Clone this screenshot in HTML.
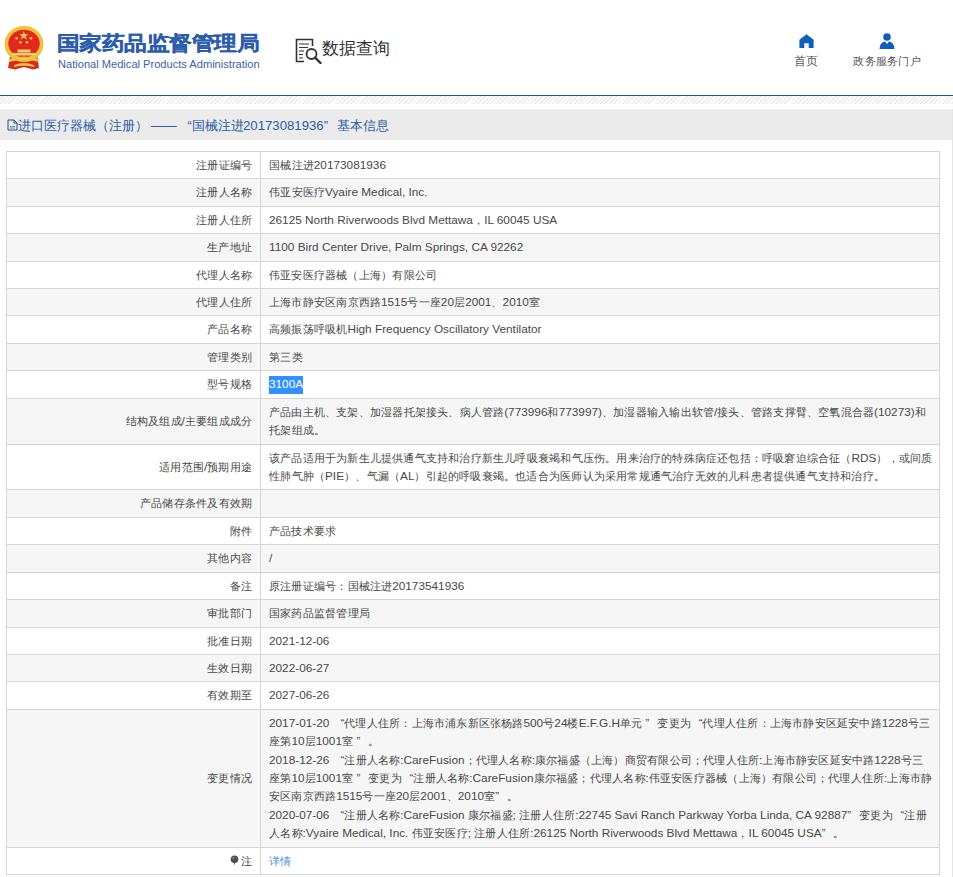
<!DOCTYPE html>
<html><head><meta charset="utf-8">
<style>
*{margin:0;padding:0;box-sizing:border-box}
html,body{width:953px;height:877px;overflow:hidden;background:#fff}
body{font-family:"Liberation Sans",sans-serif;color:#555;position:relative}
i{font-style:normal;display:inline-block;white-space:nowrap;text-align:justify;text-align-last:justify}
i.c{font-size:var(--c);width:1em}
i.d{font-size:var(--c);margin-left:5px;width:2.15em}
i.q1{font-size:var(--c);width:1.04em;text-align:right;text-align-last:right}
i.q2{font-size:var(--c);width:1.04em;text-align:left;text-align-last:left}
.hdr{position:absolute;left:0;top:0;width:953px;height:95px;background:#fff}
.emb{position:absolute;left:0;top:20px}
.t1{position:absolute;left:57px;top:29px;transform:scaleY(0.88);transform-origin:0 14px;-webkit-text-stroke:0.35px #2c5cad;--c:22.4px;font-weight:bold;color:#2c5cad;white-space:nowrap;line-height:30px}
.t2{position:absolute;left:58px;top:58px;font-size:11.1px;color:#3a62a6;white-space:nowrap;line-height:13px}
.sq{position:absolute;left:295px;top:38px}
.sqt{position:absolute;left:322px;top:37px;--c:17px;color:#333;white-space:nowrap;line-height:24px}
.nav{position:absolute;top:33px;text-align:center;--c:11.5px;color:#555;white-space:nowrap;line-height:14px}
.bl{position:absolute;left:0;top:95px;width:953px;height:1px;background:#24518f}
.hatch{position:absolute;left:0;top:96px;width:953px;height:8px;
 background:repeating-linear-gradient(135deg,#fff 0,#fff 1.8px,#ebebeb 1.8px,#ebebeb 3.1px)}
.bar{position:absolute;left:0;top:109px;width:953px;height:31px;background:#ebebeb}
.bart{position:absolute;left:7px;top:9px;font-size:13.2px;--c:12.8px;color:#2a5ca8;white-space:nowrap;line-height:16px}
.rl{position:absolute;left:952px;top:109px;width:1px;height:768px;background:#e6e6e6}
table{position:absolute;left:6px;top:151px;width:934px;border-collapse:collapse;font-size:11.8px;--c:11.2px;table-layout:fixed}
td{border:1px solid #d6d6d6;padding:4px 8px 4px 8px;line-height:18.4px;vertical-align:middle;white-space:nowrap;color:#484848}
td.l{width:254px;text-align:right;padding-right:8px}
tr:nth-child(even) td{background:#f6f6f6}
.sel{background:#3390ff;color:#fff;display:inline-block;height:17.6px;line-height:17.6px}
.lnk{color:#4a8fe0}
</style></head><body>
<div class="hdr">
 <svg class="emb" width="50" height="52" viewBox="0 0 50 52">
  <path d="M10 37 L8 48 L15 49.5 L24 47 L33 49.5 L39 48 L37.5 37 Z" fill="#d42a1e"/>
  <ellipse cx="24" cy="24" rx="19.5" ry="18" fill="#f0c040"/>
  <ellipse cx="24" cy="23.5" rx="15.7" ry="13.8" fill="#e0281c"/>
  <polygon points="23.8,11 25,14.3 28.4,14.3 25.7,16.3 26.7,19.5 23.8,17.5 20.9,19.5 21.9,16.3 19.2,14.3 22.6,14.3" fill="#f6c85a"/>
  <circle cx="16.6" cy="18.2" r="1.3" fill="#f6c85a"/>
  <circle cx="31" cy="18.2" r="1.3" fill="#f6c85a"/>
  <circle cx="20.4" cy="22.3" r="1.3" fill="#f6c85a"/>
  <circle cx="27" cy="22.3" r="1.3" fill="#f6c85a"/>
  <rect x="17.5" y="29.5" width="13" height="3" fill="#f6d070"/>
  <rect x="12" y="33" width="24" height="2.5" fill="#f6d070"/>
  <path d="M9 39 Q24 34 39 39 L39 42 Q24 38 9 42Z" fill="#f3c445"/>
  <path d="M14 45 Q24 41 34 45 L34 47 Q24 44 14 47Z" fill="#f3c445"/>
 </svg>
 <div class="t1"><i class="c" style="width:9em">国家药品监督管理局</i></div>
 <div class="t2">National Medical Products Administration</div>
 <svg class="sq" width="28" height="26" viewBox="0 0 28 26">
  <path d="M12 1.5 H1.5 V23.5 H9" fill="none" stroke="#333" stroke-width="1.6"/>
  <path d="M12 1.5 H17.5 V8" fill="none" stroke="#333" stroke-width="1.6"/>
  <path d="M4 6 H14 M4 9.5 H13 M4 13 H9 M4 16.5 H8 M4 20 H8" stroke="#333" stroke-width="1.2"/>
  <circle cx="16.5" cy="16" r="5" fill="none" stroke="#333" stroke-width="1.8"/>
  <path d="M20 19.5 L25.5 25" stroke="#333" stroke-width="2.4" stroke-linecap="round"/>
 </svg>
 <div class="sqt"><i class="c" style="width:4em">数据查询</i></div>
 <div class="nav" style="left:794px;width:24px;--c:12px">
  <svg width="15" height="14" viewBox="0 0 15 14" style="display:block;margin:1px auto 5px"><path d="M7.5 0.3 L14.6 5.8 V14 H9.7 V9.3 H5.3 V14 H0.4 V5.8 Z" fill="#0e5ec2"/></svg><i class="c" style="width:2em">首页</i></div>
 <div class="nav" style="left:853px;width:68px;--c:11.2px">
  <svg width="16" height="16" viewBox="0 0 16 16" style="display:block;margin:0 auto 4px"><circle cx="8" cy="4" r="3.8" fill="#0e5ec2"/><path d="M0.5 16 Q1 9 6 8.5 L8 11 L10 8.5 Q15 9 15.5 16Z" fill="#0e5ec2"/></svg><i class="c" style="width:6em">政务服务门户</i></div>
</div>
<div class="bl"></div>
<div class="hatch"></div>
<div class="bar"><div class="bart">
 <svg width="11" height="12" viewBox="0 0 11 12" style="vertical-align:-1px"><path d="M1 1 H7 L10 4 V11 H1Z M7 1 V4 H10" fill="none" stroke="#2f4f80" stroke-width="1"/><path d="M3 7.5 H8 M3 9 H8" stroke="#7a90b8" stroke-width="1"/></svg><i class="c" style="width:10em">进口医疗器械（注册）</i><i class="d">——</i><i class="q1">“</i><i class="c" style="width:4em">国械注进</i>20173081936<i class="q2">”</i><i class="c" style="width:4em">基本信息</i></div></div>
<div class="rl"></div>
<table>
<tr><td class="l"><i class="c" style="width:5em">注册证编号</i></td><td><i class="c" style="width:4em">国械注进</i>20173081936</td></tr>
<tr><td class="l"><i class="c" style="width:5em">注册人名称</i></td><td><i class="c" style="width:5em">伟亚安医疗</i>Vyaire Medical, Inc.</td></tr>
<tr><td class="l"><i class="c" style="width:5em">注册人住所</i></td><td>26125 North Riverwoods Blvd Mettawa<i class="c">，</i>IL 60045 USA</td></tr>
<tr><td class="l"><i class="c" style="width:4em">生产地址</i></td><td>1100 Bird Center Drive, Palm Springs, CA 92262</td></tr>
<tr><td class="l"><i class="c" style="width:5em">代理人名称</i></td><td><i class="c" style="width:15em">伟亚安医疗器械（上海）有限公司</i></td></tr>
<tr><td class="l"><i class="c" style="width:5em">代理人住所</i></td><td><i class="c" style="width:10em">上海市静安区南京西路</i>1515<i class="c" style="width:3em">号一座</i>20<i class="c">层</i>2001<i class="c">、</i>2010<i class="c">室</i></td></tr>
<tr><td class="l"><i class="c" style="width:4em">产品名称</i></td><td><i class="c" style="width:7em">高频振荡呼吸机</i>High Frequency Oscillatory Ventilator</td></tr>
<tr><td class="l"><i class="c" style="width:4em">管理类别</i></td><td><i class="c" style="width:3em">第三类</i></td></tr>
<tr><td class="l"><i class="c" style="width:4em">型号规格</i></td><td><span class="sel">3100A</span></td></tr>
<tr><td class="l"><i class="c" style="width:5em">结构及组成</i>/<i class="c" style="width:6em">主要组成成分</i></td><td><i class="c" style="width:21em">产品由主机、支架、加湿器托架接头、病人管路</i>(773996<i class="c">和</i>773997)<i class="c" style="width:10em">、加湿器输入输出软管</i>/<i class="c" style="width:14em">接头、管路支撑臂、空氧混合器</i>(10273)<i class="c">和</i><br><i class="c" style="width:5em">托架组成。</i></td></tr>
<tr><td class="l"><i class="c" style="width:4em">适用范围</i>/<i class="c" style="width:4em">预期用途</i></td><td><i class="c" style="width:52em">该产品适用于为新生儿提供通气支持和治疗新生儿呼吸衰竭和气压伤。用来治疗的特殊病症还包括：呼吸窘迫综合征（</i>RDS<i class="c" style="width:5em">），或间质</i><br><i class="c" style="width:5em">性肺气肿（</i>PIE<i class="c" style="width:5em">）、气漏（</i>AL<i class="c" style="width:42em">）引起的呼吸衰竭。也适合为医师认为采用常规通气治疗无效的儿科患者提供通气支持和治疗。</i></td></tr>
<tr><td class="l"><i class="c" style="width:10em">产品储存条件及有效期</i></td><td></td></tr>
<tr><td class="l"><i class="c" style="width:2em">附件</i></td><td><i class="c" style="width:6em">产品技术要求</i></td></tr>
<tr><td class="l"><i class="c" style="width:4em">其他内容</i></td><td>/</td></tr>
<tr><td class="l"><i class="c" style="width:2em">备注</i></td><td><i class="c" style="width:11em">原注册证编号：国械注进</i>20173541936</td></tr>
<tr><td class="l"><i class="c" style="width:4em">审批部门</i></td><td><i class="c" style="width:9em">国家药品监督管理局</i></td></tr>
<tr><td class="l"><i class="c" style="width:4em">批准日期</i></td><td>2021-12-06</td></tr>
<tr><td class="l"><i class="c" style="width:4em">生效日期</i></td><td>2022-06-27</td></tr>
<tr><td class="l"><i class="c" style="width:4em">有效期至</i></td><td>2027-06-26</td></tr>
<tr><td class="l"><i class="c" style="width:4em">变更情况</i></td><td>2017-01-20 <i class="q1">“</i><i class="c" style="width:16em">代理人住所：上海市浦东新区张杨路</i>500<i class="c">号</i>24<i class="c">楼</i>E.F.G.H<i class="c" style="width:2em">单元</i> <i class="q2">”</i><i class="c" style="width:3em">变更为</i><i class="q1">“</i><i class="c" style="width:16em">代理人住所：上海市静安区延安中路</i>1228<i class="c" style="width:2em">号三</i><br><i class="c" style="width:2em">座第</i>10<i class="c">层</i>1001<i class="c">室</i> <i class="q2">”</i><i class="c">。</i><br>2018-12-26 <i class="q1">“</i><i class="c" style="width:5em">注册人名称</i>:CareFusion<i class="c" style="width:6em">；代理人名称</i>:<i class="c" style="width:20em">康尔福盛（上海）商贸有限公司；代理人住所</i>:<i class="c" style="width:10em">上海市静安区延安中路</i>1228<i class="c" style="width:2em">号三</i><br><i class="c" style="width:2em">座第</i>10<i class="c">层</i>1001<i class="c">室</i> <i class="q2">”</i><i class="c" style="width:3em">变更为</i><i class="q1">“</i><i class="c" style="width:5em">注册人名称</i>:CareFusion<i class="c" style="width:10em">康尔福盛；代理人名称</i>:<i class="c" style="width:21em">伟亚安医疗器械（上海）有限公司；代理人住所</i>:<i class="c" style="width:4em">上海市静</i><br><i class="c" style="width:6em">安区南京西路</i>1515<i class="c" style="width:3em">号一座</i>20<i class="c">层</i>2001<i class="c">、</i>2010<i class="c">室</i><i class="q2">”</i><i class="c">。</i><br>2020-07-06 <i class="q1">“</i><i class="c" style="width:5em">注册人名称</i>:CareFusion <i class="c" style="width:4em">康尔福盛</i>; <i class="c" style="width:5em">注册人住所</i>:22745 Savi Ranch Parkway Yorba Linda, CA 92887<i class="q2">”</i><i class="c" style="width:3em">变更为</i><i class="q1">“</i><i class="c" style="width:2em">注册</i><br><i class="c" style="width:3em">人名称</i>:Vyaire Medical, Inc. <i class="c" style="width:5em">伟亚安医疗</i>; <i class="c" style="width:5em">注册人住所</i>:26125 North Riverwoods Blvd Mettawa<i class="c">，</i>IL 60045 USA<i class="q2">”</i><i class="c">。</i></td></tr>
<tr><td class="l"><svg width="9" height="11" viewBox="0 0 9 11" style="vertical-align:-1px;margin-right:2px"><path d="M3.6 7 L4.5 10.5 L5.4 7Z" fill="#666"/><circle cx="4.5" cy="4.3" r="3.8" fill="#505050"/><circle cx="3.3" cy="3" r="1.1" fill="#888"/></svg><i class="c">注</i></td><td><span class="lnk"><i class="c" style="width:2em">详情</i></span></td></tr>
</table>
</body></html>
